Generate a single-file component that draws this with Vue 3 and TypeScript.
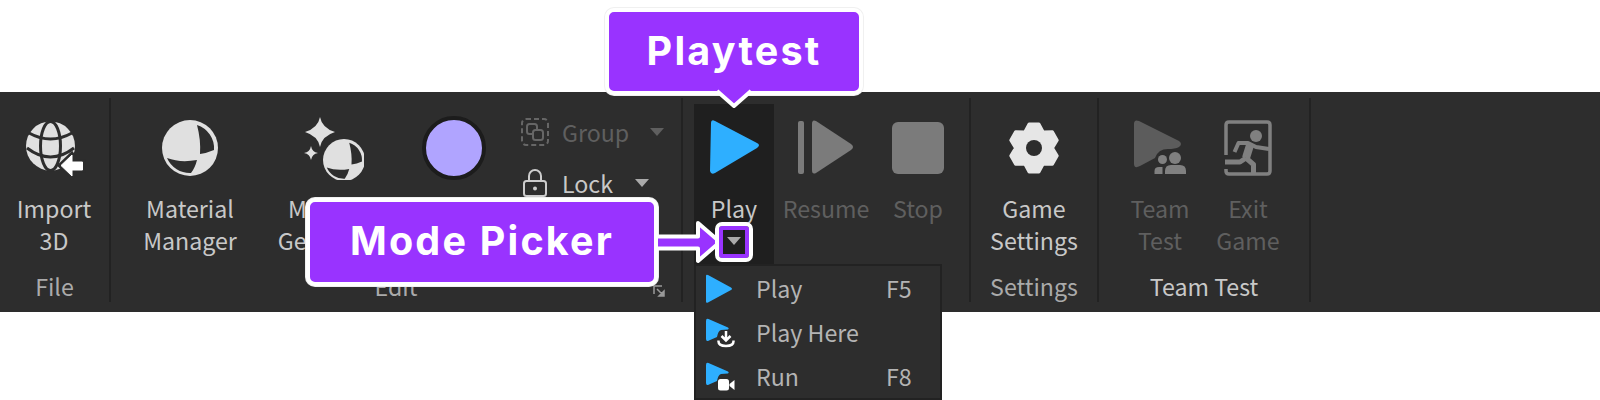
<script setup lang="ts">
const menuItems = [
  { label: 'Play', key: 'F5', badge: '' },
  { label: 'Play Here', key: '', badge: 'here' },
  { label: 'Run', key: 'F8', badge: 'run' },
]

// six toothed gear, tooth pointing up, centred on 32,32
function gearPath(): string {
  const pts: string[] = []
  for (let i = 0; i < 6; i++) {
    const a = (i * Math.PI) / 3 - Math.PI / 2
    const spots: [number, number][] = [
      [-0.52, 18.5],
      [-0.2, 24.5],
      [0.2, 24.5],
      [0.52, 18.5],
    ]
    for (const [da, r] of spots) {
      pts.push(`${(32 + r * Math.cos(a + da)).toFixed(1)} ${(32 + r * Math.sin(a + da)).toFixed(1)}`)
    }
  }
  return 'M' + pts.join('L') + 'Z'
}
const gear = gearPath()
</script>

<template>
  <div class="stage">
    <div class="toolbar">
      <section class="group file">
        <div class="tools">
          <div class="tool import">
            <svg class="icon" viewBox="0 0 64 64">
              <circle cx="28.500" cy="30" r="24.500" fill="#e0e0e0" />
              <g fill="none" stroke="#2d2d2d" stroke-width="3">
                <ellipse cx="28.500" cy="30" rx="10" ry="24.500" />
                <path d="M7 17Q28.500 29 50 17M5 32Q28.500 50 52 32" />
              </g>
              <path d="M37 49.500L50 37L53 41V45H62V55H53V58L50 62Z" fill="#2d2d2d" stroke="#2d2d2d" stroke-width="3" />
              <path d="M39 49.500L50 39V46H60.500V54H50V60Z" fill="#fff" stroke="#fff" stroke-linejoin="round" />
            </svg>
            <span class="label">Import<br />3D</span>
          </div>
        </div>
        <div class="group-name">File</div>
      </section>

      <section class="group edit">
        <div class="tools">
          <div class="tool manager">
            <svg class="icon" viewBox="0 0 64 64">
              <circle cx="32" cy="32" r="28" fill="#e0e0e0" />
              <path d="M39 9A24.500 24.500 0 0 1 56 34Q49 37 42 38Q43 24 39 9Z" fill="#2d2d2d" />
              <path d="M9 42Q22 47 39 44Q37 52 33 57A25 25 0 0 1 9 42Z" fill="#2d2d2d" />
            </svg>
            <span class="label">Material<br />Manager</span>
          </div>
          <div class="tool generator">
            <svg class="icon" viewBox="0 0 64 64">
              <path d="M20 1Q22 12 35 16Q22 20 20 31Q18 20 5 16Q18 12 20 1Z" fill="#e0e0e0" />
              <path d="M11 30Q12 36 18 37Q12 38 11 44Q10 38 4 37Q10 36 11 30Z" fill="#e0e0e0" />
              <g transform="translate(20 20) scale(0.75)">
                <circle cx="32" cy="32" r="28" fill="#e0e0e0" />
                <path d="M39 9A24.500 24.500 0 0 1 56 34Q49 37 42 38Q43 24 39 9Z" fill="#2d2d2d" />
                <path d="M9 42Q22 47 39 44Q37 52 33 57A25 25 0 0 1 9 42Z" fill="#2d2d2d" />
              </g>
            </svg>
            <span class="label">Material<br />Generator</span>
          </div>
          <div class="tool color">
            <span class="swatch"></span>
            <span class="label">Color</span>
          </div>
          <div class="rows">
            <div class="row off">
              <svg class="row-icon" viewBox="0 0 30 30">
                <rect x="2" y="2" width="26" height="26" rx="4" fill="none" stroke="#666" stroke-width="2" stroke-dasharray="5 3" />
                <rect x="7" y="7" width="10" height="10" rx="2.500" fill="none" stroke="#666" stroke-width="2" />
                <rect x="13" y="13" width="10" height="10" rx="2.500" fill="#2d2d2d" stroke="#666" stroke-width="2" />
              </svg>
              <span class="row-text">Group</span>
              <i class="caret"></i>
            </div>
            <div class="row lock">
              <svg class="row-icon" viewBox="0 0 30 30">
                <path d="M9 13V8a6 6 0 0 1 12 0V13" fill="none" stroke="#ccc" stroke-width="2" />
                <rect x="4" y="13" width="22" height="15" rx="2.500" fill="none" stroke="#ccc" stroke-width="2" />
                <circle cx="15" cy="20.500" r="2" fill="#ccc" />
              </svg>
              <span class="row-text">Lock</span>
              <i class="caret"></i>
            </div>
            <div class="row">
              <span class="row-icon"></span>
              <span class="row-text">Anchor</span>
            </div>
          </div>
        </div>
        <div class="group-name">Edit</div>
        <svg class="expand" viewBox="0 0 12 12">
          <path d="M1 9V1H9" fill="none" stroke="#999" stroke-width="1.500" />
          <path d="M4 4L9.500 9.500M11 6V11H6Z" fill="#999" stroke="#999" stroke-width="1.500" />
        </svg>
      </section>

      <section class="group test">
        <div class="tools">
          <div class="tool play">
            <svg class="icon" viewBox="0 0 64 64">
              <path d="M9 7Q9 3 13 5L55 27Q59 29 55 32L13 57Q9 59 8 55Z" fill="#2eafff" />
            </svg>
            <span class="label">Play</span>
            <i class="caret play-caret"></i>
          </div>
          <div class="tool resume off">
            <svg class="icon" viewBox="0 0 64 64">
              <rect x="4" y="5" width="6" height="53" rx="2" fill="#7b7b7b" />
              <path d="M18 8Q18 3 22 5L57 28Q61 31 57 34L22 57Q18 59 18 54Z" fill="#7b7b7b" />
            </svg>
            <span class="label">Resume</span>
          </div>
          <div class="tool stop off">
            <svg class="icon" viewBox="0 0 64 64">
              <rect x="6" y="6" width="52" height="52" rx="6" fill="#7b7b7b" />
            </svg>
            <span class="label">Stop</span>
          </div>
        </div>
        <div class="group-name">Test</div>
      </section>

      <section class="group settings">
        <div class="tools">
          <div class="tool game">
            <svg class="icon" viewBox="0 0 64 64">
              <path :d="gear" fill="#e6e6e6" stroke="#e6e6e6" stroke-width="3" stroke-linejoin="round" />
              <circle cx="32" cy="32" r="8" fill="#2d2d2d" />
            </svg>
            <span class="label">Game<br />Settings</span>
          </div>
        </div>
        <div class="group-name">Settings</div>
      </section>

      <section class="group team">
        <div class="tools">
          <div class="tool team-test off">
            <svg class="icon" viewBox="0 0 64 64">
              <path d="M6 8Q6 3 11 5L51 25Q55 28 51 31Q47 33 40 33Q30 33 27 42L12 50Q6 53 6 48Z" fill="#5c5c5c" />
              <circle cx="47" cy="42" r="6" fill="#808080" />
              <path d="M37 58V55Q37 49 43 49H52Q58 49 58 55V58Z" fill="#808080" />
              <circle cx="34.500" cy="43.500" r="4.500" fill="#808080" />
              <path d="M26.500 58V55Q26.500 51 31 51H34.500V58Z" fill="#808080" />
            </svg>
            <span class="label">Team<br />Test</span>
          </div>
          <div class="tool exit off">
            <svg class="icon" viewBox="0 0 64 64">
              <path d="M10 39V9Q10 6 13 6H51Q54 6 54 9V55Q54 58 51 58H13Q10 58 10 55V53" fill="none" stroke="#808080" stroke-width="3.500" />
              <circle cx="40" cy="20" r="6" fill="#808080" />
              <g fill="none" stroke="#808080" stroke-linejoin="round">
                <path d="M18.500 36L22.500 27H32L40 31L53 33" stroke-width="4" />
                <path d="M34 29L30 42" stroke-width="8" />
                <path d="M30 42L37.500 48.500V57" stroke-width="5" />
                <path d="M30 42L24 46H9" stroke-width="5" />
              </g>
            </svg>
            <span class="label">Exit<br />Game</span>
          </div>
        </div>
        <div class="group-name bright">Team Test</div>
      </section>
    </div>

    <ul class="menu">
      <li v-for="item in menuItems" :key="item.label" class="menu-item">
        <svg class="menu-icon" viewBox="0 0 32 32">
          <path v-if="!item.badge" d="M3 4Q3 2 5 3L28 15.500Q30 17 28 18L5 30.500Q3 31.500 3 29.500Z" fill="#2eafff" />
          <path v-else d="M3 5Q3 2 5.500 3L25 11.500Q26.500 12.500 25 13.500L18 14Q15 15 14 21L6 24.500Q3 26 3 23Z" fill="#2eafff" />
          <g v-if="item.badge === 'here'" fill="none" stroke="#fff" stroke-width="2.500">
            <path d="M23 15V24M18.500 20L23 24.500L27.500 20" />
            <path d="M15.500 24.500Q15 30 23 30Q31 30 30.500 24.500" />
          </g>
          <g v-if="item.badge === 'run'" fill="#fff">
            <rect x="15" y="19" width="11" height="11.500" rx="2.500" />
            <path d="M26.500 24L31.500 20V30L26.500 26Z" />
          </g>
        </svg>
        <span class="menu-label">{{ item.label }}</span>
        <span class="menu-key">{{ item.key }}</span>
      </li>
    </ul>

    <div class="callout playtest">Playtest</div>
    <svg class="pointer top" viewBox="0 0 40 18">
      <path d="M3 0L20 15L37 0" fill="#9933ff" stroke="#fff" stroke-width="4" stroke-linejoin="round" />
    </svg>
    <div class="callout mode">Mode Picker</div>
    <svg class="pointer side" viewBox="0 0 66 44">
      <path d="M0 16.500H42V3L64 22L42 41V28.500H0Z" fill="#9933ff" stroke="#fff" stroke-width="4" stroke-linejoin="round" />
    </svg>
    <div class="picker-box"></div>
  </div>
</template>

<style scoped>
.stage {
  position: relative;
  height: 400px;
  overflow: hidden;
  background: #fff;
  font-family: 'Noto Sans CJK SC', 'Noto Sans', sans-serif;
}
.toolbar {
  position: relative;
  display: flex;
  top: 92px;
  height: 220px;
  box-sizing: border-box;
  padding: 6px 0 10px;
  background: #2d2d2d;
}
.group {
  position: relative;
  display: flex;
  flex-direction: column;
  box-sizing: border-box;
  border-right: 2px solid #222;
}
.file { width: 111px; }
.edit { width: 572px; }
.test { width: 288px; }
.settings { width: 128px; }
.team { width: 212px; }
.tools {
  display: flex;
  flex: 1;
  padding-top: 6px;
}
.group-name {
  height: 34px;
  line-height: 36px;
  text-align: center;
  font-size: 23.2px;
  color: #aaa;
}
.group-name.bright { color: #c8c8c8; }
.tool {
  position: relative;
  display: flex;
  flex-direction: column;
  align-items: center;
  flex: none;
  padding-top: 12px;
}
.icon {
  width: 64px;
  height: 64px;
  flex: none;
}
.label {
  margin-top: 12px;
  line-height: 32px;
  font-size: 23.2px;
  text-align: center;
  color: #c8c8c8;
  white-space: nowrap;
}
.off .label { color: #5f5f5f; }
.import { width: 108px; }
.manager { width: 124px; margin-left: 17px; }
.generator { width: 120px; margin-left: 20px; }
.color { width: 64px; margin-left: 30px; }
.swatch {
  width: 56px;
  height: 56px;
  margin: 0 0 8px;
  border: 4px solid #1c1c1c;
  border-radius: 50%;
  background: #b0a4ff;
}
.rows {
  display: flex;
  flex-direction: column;
  margin-left: 34px;
  padding-top: 2px;
}
.row {
  display: flex;
  align-items: center;
  height: 51px;
  color: #c8c8c8;
}
.row.off { color: #5f5f5f; }
.row-icon {
  width: 30px;
  height: 30px;
  flex: none;
}
.row-text {
  margin-left: 12px;
  font-size: 23.2px;
  line-height: 32px;
}
.caret {
  display: block;
  width: 0;
  height: 0;
  border-left: 7px solid transparent;
  border-right: 7px solid transparent;
  border-top: 8px solid #aaa;
}
.row .caret { margin-left: 22px; }
.row.off .caret {
  margin-left: 21px;
  border-top-color: #5f5f5f;
}
.expand {
  position: absolute;
  right: 16px;
  bottom: 5px;
  width: 12px;
  height: 12px;
}
.play {
  width: 80px;
  margin-left: 11px;
  background: #1f1f1f;
}
.play-caret {
  margin-top: 13px;
  border-top-color: #aaa;
}
.resume { width: 104px; }
.stop { width: 80px; }
.game { width: 126px; }
.team-test { width: 88px; margin-left: 17px; }
.exit { width: 88px; }
.menu {
  position: absolute;
  left: 694px;
  top: 264px;
  width: 248px;
  height: 136px;
  box-sizing: border-box;
  margin: 0;
  padding: 1px 0 0;
  list-style: none;
  background: #2d2d2d;
  border: 2px solid #222;
}
.menu-item {
  display: flex;
  align-items: center;
  box-sizing: border-box;
  height: 44px;
  padding: 0 0 2px 7px;
  font-size: 23.2px;
  color: #b4b4b4;
}
.menu-icon {
  width: 32px;
  height: 32px;
  flex: none;
}
.menu-label {
  margin-left: 21px;
  width: 130px;
}
.callout {
  position: absolute;
  box-sizing: border-box;
  display: flex;
  align-items: center;
  justify-content: center;
  padding-bottom: 2px;
  border: 4px solid #fff;
  border-radius: 9px;
  box-shadow: 0 0 0 1px #f0f0f0;
  background: #9933ff;
  color: #fff;
  font-family: Inter, 'Noto Sans', sans-serif;
  font-weight: 700;
  font-size: 39.5px;
  letter-spacing: 2.2px;
}
.playtest {
  left: 605px;
  top: 8px;
  width: 258px;
  height: 87px;
}
.mode {
  left: 306px;
  top: 198px;
  width: 352px;
  height: 88px;
}
.pointer {
  position: absolute;
  display: block;
  overflow: visible;
}
.pointer.top {
  left: 714px;
  top: 91px;
  width: 40px;
  height: 18px;
}
.pointer.side {
  left: 656px;
  top: 220px;
  width: 66px;
  height: 44px;
}
.picker-box {
  position: absolute;
  left: 715px;
  top: 222px;
  width: 38px;
  height: 40px;
  box-sizing: border-box;
  border: 4px solid #fff;
  border-radius: 7px;
  box-shadow: inset 0 0 0 4px #9933ff;
}
</style>
